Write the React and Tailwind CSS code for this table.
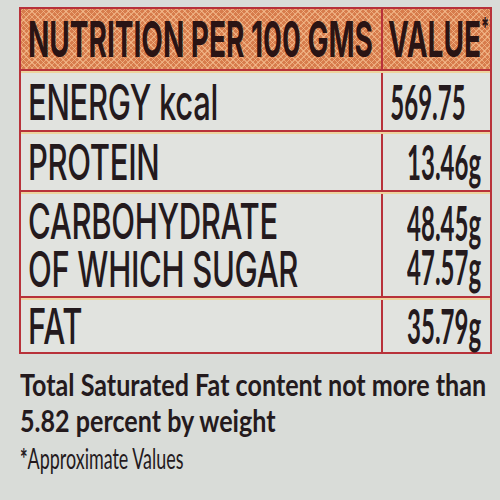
import React from "react";

const hatch =
  "bg-[#d77c4c] [background-image:repeating-linear-gradient(45deg,rgba(247,196,150,0.6)_0_1px,transparent_1px_4px),repeating-linear-gradient(-45deg,rgba(247,196,150,0.6)_0_1px,transparent_1px_4px)]";

const left = "flex w-[362px] shrink-0 border-r-2 border-[#b8323a] pl-[7px]";
const right = "flex w-[107px] shrink-0";

function Label({ children, lead = "leading-none" }) {
  return (
    <div className={`origin-left scale-x-[0.62] whitespace-nowrap font-['Inter',sans-serif] text-[50px] font-medium tracking-[-0.5px] text-[#241a1d] ${lead}`}>
      {children}
    </div>
  );
}

function Value({ children, lead = "leading-none" }) {
  return (
    <div className={`origin-right scale-x-[0.5] whitespace-nowrap font-['Lato',sans-serif] text-[48px] font-bold text-[#241a1d] ${lead}`}>
      {children}
    </div>
  );
}

export default function App() {
  return (
    <div className="h-[500px] w-[500px] overflow-hidden bg-[#d9dcd8] pt-[7px]">
      <div className="ml-[19px] w-[473px] border-2 border-[#b8323a] bg-[#e1e3df]">
        {/* header */}
        <div className={`flex h-[62px] border-b-2 border-[#b8323a] ${hatch}`}>
          <div className={`${left} items-center`}>
            <div className="origin-left scale-x-[0.56] whitespace-nowrap font-['Inter',sans-serif] text-[50px] font-bold leading-none text-[#2a1414]">
              NUTRITION PER 100 GMS
            </div>
          </div>
          <div className={`${right} items-center pl-[5px]`}>
            <div className="origin-left scale-x-[0.56] whitespace-nowrap font-['Inter',sans-serif] text-[50px] font-bold leading-none text-[#2a1414]">
              VALUE<span className="align-top text-[26px]">*</span>
            </div>
          </div>
        </div>

        {/* energy */}
        <div className="flex h-[61px] border-b-2 border-t-2 border-[#b8323a] border-t-[#edd49e]">
          <div className={`${left} items-center`}>
            <Label>ENERGY kcal</Label>
          </div>
          <div className={`${right} items-center justify-end pr-[24px]`}>
            <Value>569.75</Value>
          </div>
        </div>

        {/* protein */}
        <div className="flex h-[60px] border-b-2 border-t-2 border-[#b8323a] border-t-[#edd49e]">
          <div className={`${left} items-center`}>
            <Label>PROTEIN</Label>
          </div>
          <div className={`${right} items-center justify-end pr-[9px]`}>
            <Value>13.46g</Value>
          </div>
        </div>

        {/* carbohydrate */}
        <div className="flex h-[106px] border-b-2 border-t-2 border-[#b8323a] border-t-[#edd49e]">
          <div className={`${left} flex-col justify-center`}>
            <Label lead="leading-[48px]">CARBOHYDRATE</Label>
            <Label lead="leading-[48px]">OF WHICH SUGAR</Label>
          </div>
          <div className={`${right} flex-col items-end justify-center pr-[9px]`}>
            <Value lead="leading-[44px]">48.45g</Value>
            <Value lead="leading-[44px]">47.57g</Value>
          </div>
        </div>

        {/* fat */}
        <div className="flex h-[54px] border-t-2 border-[#edd49e]">
          <div className={`${left} items-center`}>
            <Label>FAT</Label>
          </div>
          <div className={`${right} items-center justify-end pr-[9px]`}>
            <Value>35.79g</Value>
          </div>
        </div>
      </div>

      <div className="mt-[12px] pl-[20px] font-['Lato',sans-serif] text-[#241a1d]">
        <div className="origin-left scale-x-[0.81] whitespace-nowrap text-[31px] font-bold leading-[36px]">
          Total Saturated Fat content not more than
        </div>
        <div className="origin-left scale-x-[0.81] whitespace-nowrap text-[31px] font-bold leading-[36px]">
          5.82 percent by weight
        </div>
        <div className="mt-[4px] origin-left scale-x-[0.64] whitespace-nowrap text-[28px] leading-[32px]">
          <span className="font-bold">*</span>Approximate Values
        </div>
      </div>
    </div>
  );
}
